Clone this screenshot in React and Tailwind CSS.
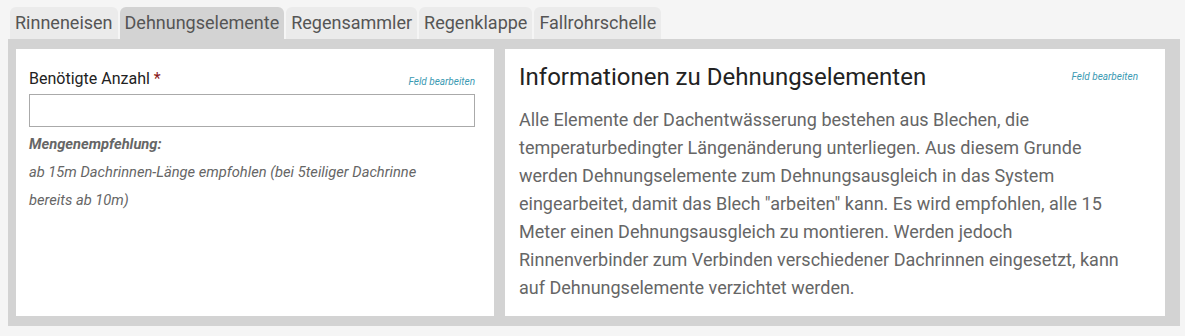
const tabs = ["Rinneneisen", "Dehnungselemente", "Regensammler", "Regenklappe", "Fallrohrschelle"];

function EditLink() {
  return <span className="text-[10px] italic leading-none text-[#3b9ab3]">Feld bearbeiten</span>;
}

export default function App() {
  return (
    <div className="h-[336px] w-[1185px] bg-[#f5f5f5] pl-2 pr-[5px] pt-[7px] font-['Roboto',sans-serif]">
      <div className="flex gap-[2px] pl-[2px]">
        {tabs.map((t, i) => (
          <div
            key={t}
            className={`h-8 rounded-t-[6px] px-[5px] pt-[7px] text-[18px] leading-none text-[#555] ${
              i === 1 ? "bg-[#d3d3d3]" : "bg-[#ebebeb]"
            }`}
          >
            {t}
          </div>
        ))}
      </div>
      <div className="flex h-[287px] gap-[11px] bg-[#d3d3d3] px-[8px] pt-[10px] pb-[10px] pr-[15px]">
        <div className="w-[478px] bg-white pl-[13px] pr-[19px] pt-[22px]">
          <div className="flex items-end justify-between">
            <span className="text-[16px] leading-none text-[#222]">
              Benötigte Anzahl <span className="text-[#8b1a1a]">*</span>
            </span>
            <EditLink />
          </div>
          <input className="mt-[7px] block h-[33px] w-full border border-[#aaa] bg-white outline-none" />
          <div className="mt-[3px] pr-[40px] text-[14.7px] italic leading-[28px] text-[#666]">
            <p className="font-bold">Mengenempfehlung:</p>
            <p>ab 15m Dachrinnen-Länge empfohlen (bei 5teiliger Dachrinne bereits ab 10m)</p>
          </div>
        </div>
        <div className="flex-1 bg-white pl-[14px] pr-[27px] pt-[14px]">
          <div className="flex items-end justify-between">
            <h2 className="text-[24px] leading-[28px] text-[#222]">Informationen zu Dehnungselementen</h2>
            <span className="pb-[4px]">
              <EditLink />
            </span>
          </div>
          <p className="mt-[15px] w-[612px] text-[18px] leading-[28px] text-[#666]">
            Alle Elemente der Dachentwässerung bestehen aus Blechen, die temperaturbedingter Längenänderung
            unterliegen. Aus diesem Grunde werden Dehnungselemente zum Dehnungsausgleich in das System
            eingearbeitet, damit das Blech "arbeiten" kann. Es wird empfohlen, alle 15 Meter einen
            Dehnungsausgleich zu montieren. Werden jedoch Rinnenverbinder zum Verbinden verschiedener
            Dachrinnen eingesetzt, kann auf Dehnungselemente verzichtet werden.
          </p>
        </div>
      </div>
    </div>
  );
}
